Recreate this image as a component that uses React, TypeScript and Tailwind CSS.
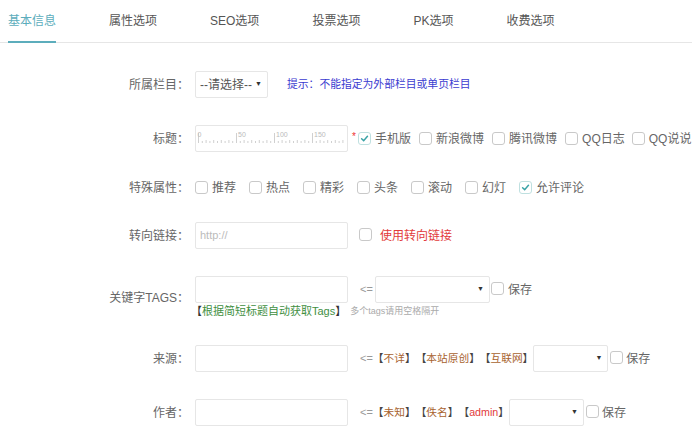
import React from 'react';

const tabs = ['基本信息', '属性选项', 'SEO选项', '投票选项', 'PK选项', '收费选项'];

const Checkbox: React.FC<{ checked?: boolean }> = ({ checked }) => (
  <span
    className={`inline-flex h-[13px] w-[13px] shrink-0 items-center justify-center rounded-[3px] border bg-white ${
      checked ? 'border-[#bfe0e0]' : 'border-[#c9c9c9]'
    }`}
  >
    {checked && (
      <svg width="9" height="9" viewBox="0 0 10 10">
        <path d="M1.8 5.3 L4.1 7.5 L8.3 2.6" stroke="#3aa3a6" strokeWidth="1.7" fill="none" strokeLinecap="round" />
      </svg>
    )}
  </span>
);

const Check: React.FC<{ label: string; checked?: boolean; className?: string }> = ({ label, checked, className }) => (
  <span className={`flex items-center ${className ?? ''}`}>
    <Checkbox checked={checked} />
    <span className="ml-[4px] text-[12px] text-[#666]">{label}</span>
  </span>
);

const Label: React.FC<{ children: React.ReactNode }> = ({ children }) => (
  <div className="w-[189px] shrink-0 text-right text-[12px] text-[#666]">{children}</div>
);

const Input: React.FC<{ placeholder?: string; children?: React.ReactNode }> = ({ placeholder, children }) => (
  <div className="relative flex h-[27px] w-[153px] shrink-0 items-center rounded-[2px] border border-[#e6e6e6] bg-white px-[4px] text-[11px] text-[#bbb]">
    {placeholder}
    {children}
  </div>
);

const Select: React.FC<{ width: string; text?: string }> = ({ width, text }) => (
  <div className={`flex h-[27px] shrink-0 items-center justify-between rounded-[2px] border border-[#e6e6e6] bg-white pl-[4px] pr-[5px] text-[12px] text-[#555] ${width}`}>
    <span>{text}</span>
    <span className="text-[7px] text-[#333]">▼</span>
  </div>
);

const Bracket: React.FC<{ text: string; color?: string }> = ({ text, color }) => (
  <span className="text-[10.7px] text-[#444]">
    【<span className={color ?? 'text-[#a8632f]'}>{text}</span>】
  </span>
);

const Ruler = () => {
  const ticks = Array.from({ length: 39 }, (_, i) => i);
  return (
    <svg width="151" height="25" viewBox="0 0 151 25" className="absolute left-0 top-0">
      {ticks.map((i) => {
        const x = 2.5 + i * 3.8;
        const major = i % 10 === 0;
        const mid = i % 2 === 0;
        return (
          <line
            key={i}
            x1={x}
            x2={x}
            y1={major ? 7 : mid ? 14 : 15}
            y2={17}
            stroke="#c4c4c4"
            strokeWidth="0.8"
          />
        );
      })}
      {['0', '50', '100', '150'].map((n, i) => (
        <text key={n} x={i === 0 ? 1.5 : 4 + i * 38} y={11} fontSize="7" fill="#bbb" fontFamily="Liberation Sans, sans-serif">
          {n}
        </text>
      ))}
    </svg>
  );
};

export default function App() {
  return (
    <div className="h-[437px] w-[692px] overflow-hidden bg-white font-['Liberation_Sans','Noto_Sans_CJK_SC',sans-serif]">
      <div className="flex gap-[53px] border-b border-[#e6e6e6] pl-[8px]">
        {tabs.map((t, i) => (
          <div
            key={t}
            className={`-mb-px flex h-[43px] items-center border-b-2 text-[12px] ${
              i === 0 ? 'border-[#5cadbc] text-[#5cadbc]' : 'border-transparent text-[#555]'
            }`}
          >
            {t}
          </div>
        ))}
      </div>

      <div className="mt-[28px] flex items-center">
        <Label>所属栏目：</Label>
        <div className="ml-[6px] flex items-center">
          <Select width="w-[73px]" text="--请选择--" />
          <span className="ml-[19px] text-[10.8px] text-[#3b3bd0]">提示：不能指定为外部栏目或单页栏目</span>
        </div>
      </div>

      <div className="mt-[27px] flex items-center">
        <Label>标题：</Label>
        <div className="ml-[6px] flex items-center">
          <Input>
            <Ruler />
          </Input>
          <span className="ml-[4px] mb-[4px] w-[6px] text-[10px] text-[#e33]">*</span>
          <Check label="手机版" checked />
          <Check label="新浪微博" className="ml-[8px]" />
          <Check label="腾讯微博" className="ml-[8px]" />
          <Check label="QQ日志" className="ml-[8px]" />
          <Check label="QQ说说" className="ml-[7px]" />
        </div>
      </div>

      <div className="mt-[22px] flex h-[27px] items-center">
        <Label>特殊属性：</Label>
        <div className="ml-[6px] flex items-center gap-[13px]">
          <Check label="推荐" />
          <Check label="热点" />
          <Check label="精彩" />
          <Check label="头条" />
          <Check label="滚动" />
          <Check label="幻灯" />
          <Check label="允许评论" checked />
        </div>
      </div>

      <div className="mt-[21px] flex items-center">
        <Label>转向链接：</Label>
        <div className="ml-[6px] flex items-center">
          <Input placeholder="http://" />
          <span className="ml-[11px]">
            <Checkbox />
          </span>
          <span className="ml-[8px] text-[12px] text-[#e23b3b]">使用转向链接</span>
        </div>
      </div>

      <div className="mt-[27px] flex items-center">
        <Label>关键字TAGS：</Label>
        <div className="ml-[6px] flex flex-col">
          <div className="flex items-center">
            <Input />
            <span className="ml-[12px] w-[15px] text-[11px] text-[#999]">&lt;=</span>
            <Select width="w-[115px]" />
            <span className="ml-[1px]">
              <Checkbox />
            </span>
            <span className="ml-[4px] text-[12px] text-[#666]">保存</span>
          </div>
          <div className="-ml-[4px] flex h-[17px] items-center">
            <span className="text-[11px] text-[#333]">
              【<span className="text-[#3f8f3f]">根据简短标题自动获取Tags</span>】
            </span>
            <span className="ml-[4px] text-[9px] text-[#aaa]">多个tags请用空格隔开</span>
          </div>
        </div>
      </div>

      <div className="mt-[25px] flex items-center">
        <Label>来源：</Label>
        <div className="ml-[6px] flex items-center">
          <Input />
          <span className="ml-[12px] text-[11px] text-[#999]">&lt;=</span>
          <Bracket text="不详" />
          <Bracket text="本站原创" />
          <Bracket text="互联网" />
          <Select width="w-[75px]" />
          <span className="ml-[2px]">
            <Checkbox />
          </span>
          <span className="ml-[3px] text-[12px] text-[#666]">保存</span>
        </div>
      </div>

      <div className="mt-[27px] flex items-center">
        <Label>作者：</Label>
        <div className="ml-[6px] flex items-center">
          <Input />
          <span className="ml-[12px] text-[11px] text-[#999]">&lt;=</span>
          <Bracket text="未知" />
          <Bracket text="佚名" />
          <Bracket text="admin" color="text-[#e23b3b]" />
          <Select width="w-[75px]" />
          <span className="ml-[2px]">
            <Checkbox />
          </span>
          <span className="ml-[3px] text-[12px] text-[#666]">保存</span>
        </div>
      </div>
    </div>
  );
}
